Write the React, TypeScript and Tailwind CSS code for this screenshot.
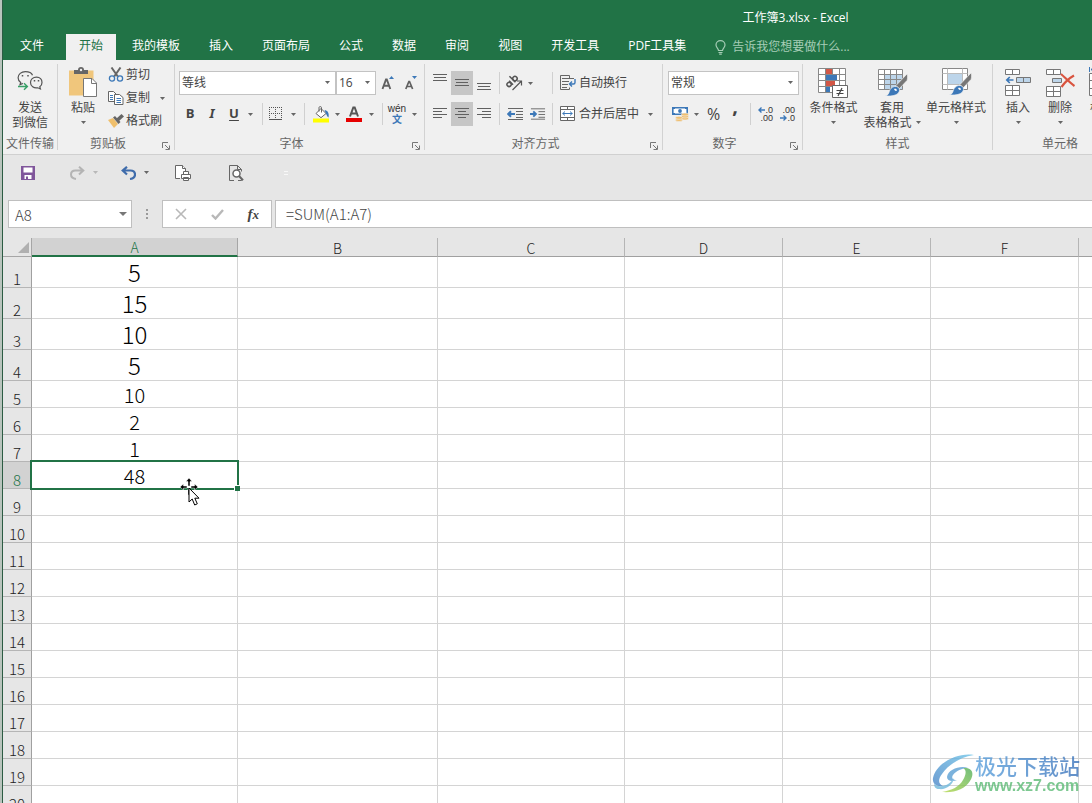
import type { ReactNode } from "react";

const sans = "font-['Open_Sans','Noto_Sans_CJK_SC',sans-serif]";

function Caret({ muted = false }: { muted?: boolean }) {
  return (
    <svg width="5" height="3" viewBox="0 0 5 3" className="shrink-0" aria-hidden="true">
      <path d="M0 0h5L2.5 3z" fill={muted ? "#b8b8b8" : "#666"} />
    </svg>
  );
}

function DropButton({ label, className = "w-4" }: { label: string; className?: string }) {
  return (
    <button aria-label={label} className={`flex h-6 shrink-0 items-center justify-center ${className}`}>
      <Caret />
    </button>
  );
}

function Divider() {
  return <div className="h-[22px] w-px shrink-0 bg-[#d0d0d0]" />;
}

function Group({ title, width, launcher = false, children }: { title: string; width: string; launcher?: boolean; children: ReactNode }) {
  return (
    <section aria-label={title} className={`flex shrink-0 flex-col ${width}`}>
      <div className="h-[75px]">{children}</div>
      <div className="flex h-[18px] items-center text-[#666]">
        <span className="flex-1 text-center whitespace-nowrap">{title}</span>
        {launcher && (
          <button aria-label={`${title}设置`} className="mx-1 mt-1 flex size-2 items-center justify-center">
            <svg width="8" height="8" viewBox="0 0 8 8" fill="none" stroke="#777">
              <path d="M.5 6V.5H6M3 3l4 4M7.5 3.5v4h-4" />
            </svg>
          </button>
        )}
      </div>
    </section>
  );
}

function Separator() {
  return <div className="my-1 w-px shrink-0 bg-[#d2d2d2]" />;
}

function BigButton({ icon, lines, width, caret = "none" }: { icon: ReactNode; lines: string[]; width: string; caret?: "none" | "below" | "inline" }) {
  return (
    <button className={`flex shrink-0 flex-col items-center pt-1.5 leading-[15px] whitespace-nowrap ${width}`}>
      <span className="mb-0.5 flex h-8 items-center justify-center">{icon}</span>
      {lines.map((line, i) => (
        <span key={line} className="flex items-center justify-center">
          {line}
          {caret === "inline" && i === lines.length - 1 && (
            <span className="ml-1">
              <Caret />
            </span>
          )}
        </span>
      ))}
      {caret === "below" && (
        <span className="flex h-[15px] items-center">
          <Caret />
        </span>
      )}
    </button>
  );
}

function IconButton({ label, active = false, width = "w-[22px]", children }: { label: string; active?: boolean; width?: string; children: ReactNode }) {
  return (
    <button aria-label={label} className={`flex h-6 shrink-0 items-center justify-center ${width} ${active ? "bg-[#c6c6c6]" : ""}`}>
      {children}
    </button>
  );
}

function Combo({ label, value, width }: { label: string; value: string; width: string }) {
  return (
    <div className={`relative shrink-0 ${width}`}>
      <select aria-label={label} defaultValue={value} className="h-6 w-full appearance-none border border-[#c3c3c3] bg-white pl-0.5 text-xs text-[#444]">
        <option>{value}</option>
      </select>
      <span className="pointer-events-none absolute top-2.5 right-1.5 flex">
        <Caret />
      </span>
    </div>
  );
}

function LinesIcon({ rows }: { rows: [number, number, number][] }) {
  return (
    <svg width="14" height="18" viewBox="0 0 14 18" stroke="#606060" aria-hidden="true">
      {rows.map(([x1, x2, y]) => (
        <path key={y} d={`M${x1} ${y}.5H${x2}`} />
      ))}
    </svg>
  );
}

function WeChatIcon() {
  return (
    <svg width="26" height="24" viewBox="0 0 26 24" fill="none" stroke="#555" strokeWidth="1.2">
      <path d="M15.500 5.200C14.700 3 11.700 1.600 8.300 1.600 4.300 1.600 1.100 4.300 1.100 7.700c0 2 1 3.600 2.600 4.700L3 14.700l2.800-1.300" />
      <path d="M13.500 12.500c0-3.100 2.500-5.400 6-5.400s5.500 2.400 5.500 5.300c0 1.800-.9 3.300-2.200 4.300l.6 2.300-2.600-1.200c-4 .8-7.300-1.700-7.300-5.300z" />
      <path d="M1 16.500h9M7 13.200l3.400 3.300L7 19.800" stroke="#37a067" strokeWidth="1.400" />
      <path d="M5.500 5v1.500M11 5v1.500M17.500 10v1.500M21.500 10v1.500" strokeWidth="1.500" />
    </svg>
  );
}

function PasteIcon() {
  return (
    <svg width="30" height="30" viewBox="0 0 30 30">
      <path d="M1 3.500h24.500V28.500H1z" fill="#f0c67c" />
      <path d="M6 3h4c0-1.800 1-3 3-3s3 1.200 3 3h4v4H6z" fill="#666" />
      <circle cx="13" cy="3" r="1.200" fill="#f0f0f0" />
      <path d="M15.500 11.500h8.500l4.500 4.500v13.500h-13z" fill="#fff" stroke="#777" />
      <path d="M23.500 11.500v5h5" fill="none" stroke="#777" />
    </svg>
  );
}

function CutIcon() {
  return (
    <svg width="16" height="15" viewBox="0 0 16 15" fill="none">
      <path d="M3.500.5l6.300 9M12.500.5l-6.300 9" stroke="#666" strokeWidth="2" />
      <circle cx="4" cy="11.500" r="2.600" stroke="#3c78b8" strokeWidth="1.300" />
      <circle cx="12" cy="11.500" r="2.600" stroke="#3c78b8" strokeWidth="1.300" />
    </svg>
  );
}

function CopyIcon() {
  return (
    <svg width="16" height="14" viewBox="0 0 16 14" fill="#fff" stroke="#666">
      <path d="M.5.5h5l3 3v7h-8z" />
      <path d="M6.500 3.500h5l3.500 3v7H6.500z" />
      <path d="M2 4.500h3M2 6.500h3M2 8.500h3M8.500 7.500h4.500M8.500 9.500h4.500M8.500 11.500h4.500" stroke="#3c78b8" />
    </svg>
  );
}

function BrushIcon() {
  return (
    <svg width="16" height="14" viewBox="0 0 16 14">
      <path d="M0 6l5-2 5 6-4 4z" fill="#efbf6c" />
      <path d="M5 3.500L7 2l5.500 6-2 2z" fill="#666" />
      <path d="M8.500 4.500L13.500 0 16 2.500l-5 4.500z" fill="#666" />
    </svg>
  );
}

function BorderIcon() {
  return (
    <svg width="14" height="14" viewBox="0 0 14 14" fill="none" stroke="#555">
      <path d="M0 .5h13M0 6.500h13M.5 0v13M6.500 0v13M12.500 0v13" strokeDasharray="1 1" />
      <path d="M0 12.500h13" />
    </svg>
  );
}

function FillIcon() {
  return (
    <svg width="17" height="17" viewBox="0 0 17 17">
      <path d="M3 7.500L8 2.500l5 5-5 4.200z" fill="#fff" stroke="#666" />
      <path d="M6 5.500V1.500c0-1.200 2.500-1.200 2.500 0v5" fill="none" stroke="#666" />
      <path d="M11.500 4c3 .3 5 3 4 7.500-1.500-.6-1.600-2.600-2.600-4z" fill="#3c78b8" />
      <path d="M0 12.500h16v4H0z" fill="#ff0" />
    </svg>
  );
}

function FontColorIcon() {
  return (
    <svg width="16" height="16" viewBox="0 0 16 16">
      <path d="M4 10.500L7.300 1.500h1.400L12 10.500M5.500 7.500h5" fill="none" stroke="#555" strokeWidth="2" />
      <path d="M0 12h16v4H0z" fill="#e60000" />
    </svg>
  );
}

function FontSizeIcon({ grow }: { grow: boolean }) {
  return (
    <svg width="14" height="16" viewBox="0 0 14 16">
      {grow ? (
        <path d="M1.500 14L5 4.500h.8L9.300 14M2.800 10.800h5.200" fill="none" stroke="#606060" strokeWidth="1.900" />
      ) : (
        <path d="M1.800 14L4.900 6.500h.6L8.600 14M3 11.500h4.600" fill="none" stroke="#606060" strokeWidth="1.700" />
      )}
      <path d={grow ? "M8 4l2.500-3L13 4z" : "M8 1h5l-2.500 3z"} fill="#3c78b8" />
    </svg>
  );
}

function OrientationIcon() {
  return (
    <svg width="18" height="18" viewBox="0 0 18 18" fill="none" stroke="#555">
      <g transform="translate(5.500 9) rotate(-45)" strokeWidth="1.500">
        <circle cx="-2" cy="0" r="2.100" />
        <path d="M.6 -2.500V3M4 -5.500V3" />
        <circle cx="6.300" cy="0" r="2.200" />
      </g>
      <path d="M7.500 16l8.500-8.500M12 7H16.500V11.500" strokeWidth="1.200" />
    </svg>
  );
}

function IndentIcon({ increase }: { increase: boolean }) {
  return (
    <svg width="17" height="14" viewBox="0 0 17 14" fill="none">
      <path d="M1 1.500h15M9 4.500h7M9 7.500h7M9 10.500h7M1 12.500h15" stroke="#666" />
      <path d={increase ? "M0 7H6M3.500 4.200L6.300 7 3.500 9.800" : "M8 7H1.500M4 4.200L1.200 7 4 9.800"} stroke="#3c78b8" strokeWidth="2" />
    </svg>
  );
}

function WrapIcon() {
  return (
    <svg width="16" height="16" viewBox="0 0 16 16" fill="none" stroke="#666">
      <path d="M.5.5h9v3M.5.5v14h9v-2M2 3.500h12M2 6.500h7M2 9.500h6M2 12.500h5" />
      <path d="M15 4v3.500c0 1-.5 1.500-1.500 1.500H10M12 6.500L9.500 9l2.500 2.500" stroke="#3c78b8" strokeWidth="1.400" />
    </svg>
  );
}

function MergeIcon() {
  return (
    <svg width="16" height="16" viewBox="0 0 16 16" fill="#fff" stroke="#666">
      <path d="M.5.500h14v14H.5zM.5 3.500h14M.5 11.500h14M7.500.500v3M7.500 11.500v3" />
      <path d="M2.500 7.500h10M5 5.500L2.800 7.500 5 9.500M10 5.500l2.200 2L10 9.500" fill="none" stroke="#3c78b8" />
    </svg>
  );
}

function CurrencyIcon() {
  return (
    <svg width="17" height="16" viewBox="0 0 17 16">
      <path d="M.8 1.800h14.400v6.400H.8z" fill="#fff" stroke="#3c78b8" strokeWidth="1.600" />
      <path d="M0 1h3v2H0zM13 1h3v2h-3zM0 7h3v2H0z" fill="#3c78b8" />
      <circle cx="8" cy="5" r="1.900" fill="#3c78b8" />
      <g fill="#f0bf70" stroke="#f0f0f0" strokeWidth=".6">
        <ellipse cx="13" cy="12.500" rx="3.500" ry="1.500" />
        <ellipse cx="13" cy="10.500" rx="3.500" ry="1.500" />
        <ellipse cx="13" cy="8.500" rx="3.500" ry="1.500" />
        <ellipse cx="7" cy="14" rx="3.500" ry="1.500" />
        <ellipse cx="7" cy="11.800" rx="3.500" ry="1.500" />
      </g>
    </svg>
  );
}

function DecimalIcon({ increase }: { increase: boolean }) {
  return (
    <span className="flex w-4 flex-col font-['Liberation_Sans',sans-serif] text-[9px] leading-[8px] text-[#333]">
      <span className="flex items-center justify-end">
        {increase && (
          <svg width="7" height="6" viewBox="0 0 7 6" fill="none" stroke="#3c78b8" strokeWidth="1.400">
            <path d="M7 3H1M3.500.5L1 3l2.500 2.500" />
          </svg>
        )}
        {increase ? ".0" : ".00"}
      </span>
      <span className="flex items-center justify-end">
        {!increase && (
          <svg width="7" height="6" viewBox="0 0 7 6" fill="none" stroke="#3c78b8" strokeWidth="1.400">
            <path d="M0 3h6M3.500.5L6 3 3.500 5.500" />
          </svg>
        )}
        {increase ? ".00" : ".0"}
      </span>
    </span>
  );
}

function PaintBrush({ x, y }: { x: number; y: number }) {
  return (
    <g transform={`translate(${x} ${y})`}>
      <path d="M22 0c.8.600.8 5 0 6.500l-8 8.500-3-3.500z" fill="#777" stroke="#f0f0f0" strokeWidth=".7" />
      <path d="M9.500 12.500c3-.5 5.300 1.300 5 4-.6 4.300-6 6-14.500 5.500 3-.6 3.500-2 4.300-4.500.7-2.700 2.600-4.500 5.200-5z" fill="#3c78b8" stroke="#f0f0f0" strokeWidth=".7" />
      <path d="M9 15c1.500-.6 2.800 0 3 1.400-.9.800-2.200.8-3-1.400z" fill="#fff" />
    </g>
  );
}

function ConditionalIcon() {
  return (
    <svg width="31" height="31" viewBox="0 0 31 31">
      <path d="M.5 1.500h27v24H.5z" fill="#fff" />
      <path d="M.5 1.500h27v24H.5zM.5 7.500h27M.5 13.500h27M.5 19.500h27M7.500 1.500v24M14.500 1.500v24M21.500 1.500v24" fill="none" stroke="#888" />
      <path d="M8 2h6v5H8zM8 14h9v5H8z" fill="#d35746" />
      <path d="M8 8h11v5H8zM8 20h4v5H8z" fill="#3c78b8" />
      <path d="M14.500 18.500h15v12h-15z" fill="#fff" stroke="#666" />
      <path d="M18.500 23.500h7M18.500 26.500h7M24 21l-4 8" stroke="#444" strokeWidth="1.200" />
    </svg>
  );
}

function TableStyleIcon() {
  return (
    <svg width="31" height="30" viewBox="0 0 31 30">
      <path d="M1.500 2.500h24v20h-24z" fill="#fff" />
      <path d="M8 8h18v15H8z" fill="#bdd5ea" />
      <path d="M1.500 2.500h24v20h-24zM1.500 7.500h24M1.500 12.500h24M1.500 17.500h24M7.500 2.500v20M13.500 2.500v20M19.500 2.500v20" fill="none" stroke="#888" />
      <PaintBrush x={8} y={7} />
    </svg>
  );
}

function CellStyleIcon() {
  return (
    <svg width="31" height="30" viewBox="0 0 31 30">
      <path d="M1.500 1.500h25v21h-25z" fill="#fff" stroke="#888" />
      <path d="M1.500 6.500h25M1.500 17.500h25M6.500 1.500v21M21.500 1.500v21" stroke="#bbb" />
      <path d="M7 7h14v10H7z" fill="#bdd5ea" />
      <PaintBrush x={8} y={6} />
    </svg>
  );
}

function InsertIcon() {
  return (
    <svg width="28" height="29" viewBox="0 0 28 29" fill="#fff" stroke="#777">
      <path d="M1.500 1.500h14v5h-14zM8.500 1.500v5M1.500 17.500h14v10h-14zM1.500 22.500h14M8.500 17.500v10" />
      <path d="M12.500 9.500h14v5h-14zM19.500 9.500v5" fill="#bdd5ea" />
      <path d="M9.500 12H3M5.800 9L2.800 12l3 3" fill="none" stroke="#3c78b8" strokeWidth="1.700" />
    </svg>
  );
}

function DeleteIcon() {
  return (
    <svg width="30" height="29" viewBox="0 0 30 29" fill="#fff" stroke="#777">
      <path d="M1.500 1.500h14v5h-14zM8.500 1.500v5M1.500 18.500h14v10h-14zM1.500 23.500h14M8.500 18.500v10" />
      <path d="M7.500 10.500h9v4h-9z" fill="#bdd5ea" />
      <path d="M16 6c4 3.500 9 9 13.500 12M29 7.500C24.500 10 20 14 16.500 19" fill="none" stroke="#d9543f" strokeWidth="2.200" />
    </svg>
  );
}

function FormatIcon() {
  return (
    <svg width="28" height="30" viewBox="0 0 28 30" fill="#fff" stroke="#777">
      <path d="M1.500 6.500h25v22h-25zM1.500 13.500h25M1.500 21.500h25M9.500 6.500v22M18.500 6.500v22" />
      <path d="M1.500 0v5M26.500 0v5M3 2.500h22M6 0L3 2.500 6 5" fill="none" stroke="#3c78b8" />
    </svg>
  );
}

function Ribbon() {
  return (
    <div className="flex h-[95px] shrink-0 overflow-hidden border-b border-[#d0d0d0] bg-[#f0f0f0]">
      <Group title="文件传输" width="w-[54px]">
        <BigButton icon={<WeChatIcon />} lines={["发送", "到微信"]} width="w-full" />
      </Group>
      <Separator />
      <Group title="剪贴板" width="w-[116px]" launcher>
        <div className="flex">
          <BigButton icon={<PasteIcon />} lines={["粘贴"]} width="w-[50px]" caret="below" />
          <div className="flex flex-1 flex-col pt-[3px]">
            <button className="flex h-[23px] items-center gap-0.5">
              <CutIcon />
              剪切
            </button>
            <div className="flex items-center">
              <button className="flex h-[23px] items-center gap-0.5">
                <CopyIcon />
                复制
              </button>
              <DropButton label="复制选项" className="w-6" />
            </div>
            <button className="flex h-[22px] items-center gap-0.5">
              <BrushIcon />
              格式刷
            </button>
          </div>
        </div>
      </Group>
      <Separator />
      <Group title="字体" width="w-[249px]" launcher>
        <div className="flex flex-col gap-[7px] pt-[11px] pl-1">
          <div className="flex items-center">
            <Combo label="字体" value="等线" width="w-[157px]" />
            <Combo label="字号" value="16" width="w-10" />
            <IconButton label="增大字号" width="w-6">
              <FontSizeIcon grow />
            </IconButton>
            <IconButton label="减小字号">
              <FontSizeIcon grow={false} />
            </IconButton>
          </div>
          <div className="flex items-center">
            <button aria-label="加粗" className="h-6 w-[22px] text-[13px] font-bold">B</button>
            <button aria-label="倾斜" className="h-6 w-[22px] font-['Noto_Sans',sans-serif] text-[13px] font-bold italic">I</button>
            <button aria-label="下划线" className="h-6 w-[22px] text-[13px] font-bold underline underline-offset-2">U</button>
            <DropButton label="下划线选项" className="w-[11px]" />
            <div className="w-1.5" />
            <Divider />
            <IconButton label="边框" width="w-[26px]">
              <BorderIcon />
            </IconButton>
            <DropButton label="边框选项" className="w-2" />
            <div className="w-[7px]" />
            <Divider />
            <IconButton label="填充颜色" width="w-7 pl-1">
              <FillIcon />
            </IconButton>
            <DropButton label="填充颜色选项" className="w-2" />
            <IconButton label="字体颜色" width="w-[26px]">
              <FontColorIcon />
            </IconButton>
            <DropButton label="字体颜色选项" className="w-2" />
            <div className="w-[7px]" />
            <Divider />
            <button aria-label="拼音" className="flex h-6 w-7 flex-col items-center justify-center font-['Liberation_Sans','Noto_Sans_CJK_SC',sans-serif] text-[10px] leading-[11px] text-[#333]">
              <span>wén</span>
              <span className="font-bold text-[#3c78b8]">文</span>
            </button>
            <DropButton label="拼音选项" className="w-1.5" />
          </div>
        </div>
      </Group>
      <Separator />
      <Group title="对齐方式" width="w-[237px]" launcher>
        <div className="flex flex-col gap-[7px] pt-[11px] pl-1">
          <div className="flex items-center">
            <IconButton label="顶端对齐">
              <LinesIcon rows={[[0, 14, 0], [1, 13, 3], [0, 14, 6]]} />
            </IconButton>
            <IconButton label="垂直居中" active>
              <LinesIcon rows={[[0, 14, 5], [1, 13, 8], [0, 14, 11]]} />
            </IconButton>
            <IconButton label="底端对齐">
              <LinesIcon rows={[[0, 14, 9], [1, 13, 12], [0, 14, 15]]} />
            </IconButton>
            <div className="w-1" />
            <Divider />
            <IconButton label="方向" width="w-7">
              <OrientationIcon />
            </IconButton>
            <DropButton label="方向选项" className="w-1" />
            <div className="w-5" />
            <Divider />
            <button className="ml-[7px] flex h-6 shrink-0 items-center gap-[3px] whitespace-nowrap">
              <WrapIcon />
              自动换行
            </button>
          </div>
          <div className="flex items-center">
            <IconButton label="左对齐">
              <LinesIcon rows={[[0, 14, 3], [0, 9, 6], [0, 14, 9], [0, 9, 12]]} />
            </IconButton>
            <IconButton label="居中" active>
              <LinesIcon rows={[[0, 14, 3], [3, 11, 6], [0, 14, 9], [3, 11, 12]]} />
            </IconButton>
            <IconButton label="右对齐">
              <LinesIcon rows={[[0, 14, 3], [5, 14, 6], [0, 14, 9], [5, 14, 12]]} />
            </IconButton>
            <div className="w-1" />
            <Divider />
            <IconButton label="减少缩进量" width="w-[30px]">
              <IndentIcon increase={false} />
            </IconButton>
            <IconButton label="增加缩进量" width="w-4">
              <IndentIcon increase />
            </IconButton>
            <div className="w-1.5" />
            <Divider />
            <button className="ml-[7px] flex h-6 shrink-0 items-center gap-[3px] whitespace-nowrap">
              <MergeIcon />
              合并后居中
            </button>
            <DropButton label="合并选项" className="w-[22px]" />
          </div>
        </div>
      </Group>
      <Separator />
      <Group title="数字" width="w-[139px]" launcher>
        <div className="flex flex-col gap-[7px] pt-[11px] pl-[5px]">
          <Combo label="数字格式" value="常规" width="w-[131px]" />
          <div className="flex items-center">
            <IconButton label="会计数字格式" width="w-6">
              <CurrencyIcon />
            </IconButton>
            <DropButton label="会计格式选项" className="w-2" />
            <button aria-label="百分比" className="h-6 w-[27px] text-base">%</button>
            <button aria-label="千位分隔" className="flex h-6 w-4 items-center justify-center pb-4 text-xl leading-none font-bold">,</button>
            <div className="w-[7px]" />
            <Divider />
            <IconButton label="增加小数位" width="w-7">
              <DecimalIcon increase />
            </IconButton>
            <IconButton label="减少小数位" width="w-4">
              <DecimalIcon increase={false} />
            </IconButton>
          </div>
        </div>
      </Group>
      <Separator />
      <Group title="样式" width="w-[189px]">
        <div className="flex">
          <BigButton icon={<ConditionalIcon />} lines={["条件格式"]} width="w-[61px]" caret="below" />
          <BigButton icon={<TableStyleIcon />} lines={["套用", "表格格式"]} width="w-14" caret="inline" />
          <BigButton icon={<CellStyleIcon />} lines={["单元格样式"]} width="w-[72px]" caret="below" />
        </div>
      </Group>
      <Separator />
      <Group title="单元格" width="w-[134px]">
        <div className="flex pl-1">
          <BigButton icon={<InsertIcon />} lines={["插入"]} width="w-[42px]" caret="below" />
          <BigButton icon={<DeleteIcon />} lines={["删除"]} width="w-[42px]" caret="below" />
          <BigButton icon={<FormatIcon />} lines={["格式"]} width="w-[42px]" caret="below" />
        </div>
      </Group>
    </div>
  );
}

const tabs = ["开始", "我的模板", "插入", "页面布局", "公式", "数据", "审阅", "视图", "开发工具", "PDF工具集"];

function TitleBar() {
  return (
    <header className="flex h-[60px] shrink-0 flex-col bg-[#217346] text-xs text-white">
      <div className="flex h-9 items-center justify-center pl-[496px] whitespace-nowrap">工作簿3.xlsx - Excel</div>
      <nav className="-mt-0.5 flex h-[26px] pl-1 whitespace-nowrap">
        <button className="mr-[9px] px-[13px] pb-0.5">文件</button>
        <div className="flex gap-[3px]">
          {tabs.map((tab, i) => (
            <button key={tab} className={`px-[13px] pb-0.5 ${i === 0 ? "bg-[#f0f0f0] text-[#217346]" : ""}`}>
              {tab}
            </button>
          ))}
        </div>
        <button className="ml-4 flex items-center gap-1.5 text-[#a6cdb6]">
          <svg width="11" height="15" viewBox="0 0 11 15" fill="none" stroke="#a6cdb6" strokeWidth="1.200">
            <path d="M3.500 10.500C3.500 8.500 1 7.500 1 5a4.500 4.300 0 0 1 9 0c0 2.500-2.500 3.500-2.500 5.500zM3.500 12.500h4M4.200 14.200h2.600" />
          </svg>
          告诉我您想要做什么...
        </button>
      </nav>
    </header>
  );
}

function QuickAccess() {
  return (
    <div className="flex h-[35px] shrink-0 items-center pl-[18px]">
      <button aria-label="保存" className="mr-[35px]">
        <svg width="14" height="14" viewBox="0 0 14 14">
          <path d="M0 0h14v14H0z" fill="#80569b" />
          <path d="M2.500 1.500h9v5h-9zM3.500 9h7v4h-7z" fill="#fff" />
          <path d="M5 10.500h2V13H5z" fill="#80569b" />
        </svg>
      </button>
      <button aria-label="恢复" className="mr-2">
        <svg width="15" height="14" viewBox="0 0 15 14" fill="none" stroke="#b4b4b4" strokeWidth="2">
          <path d="M6 13C2.500 12.500 1 10.500 1 8.500 1 6 3 4.500 5.500 4.500H13M9 .8l4.300 3.700L9 8.500" />
        </svg>
      </button>
      <Caret muted />
      <button aria-label="撤消" className="mr-2 ml-[23px]">
        <svg width="15" height="14" viewBox="0 0 15 14" fill="none" stroke="#3f6cab" strokeWidth="2.200">
          <path d="M9 13c3.500-.5 5-2.500 5-4.500 0-2.500-2-4-4.500-4H2M6 .8L1.700 4.500 6 8.500" />
        </svg>
      </button>
      <Caret />
      <button aria-label="快速打印" className="ml-[26px]">
        <svg width="17" height="16" viewBox="0 0 17 16" fill="#fff" stroke="#666">
          <path d="M5 13.500H.5V.5h7l3 3V6" />
          <path d="M7.500.5v3h3M6.500 9.500h9v4h-9zM8.500 6.500h5v3h-5zM8.500 12.500h5v3h-5z" />
        </svg>
      </button>
      <button aria-label="打印预览" className="ml-[37px]">
        <svg width="15" height="16" viewBox="0 0 15 16" fill="none" stroke="#666">
          <path d="M5 15.500H.5V.5h8l4 4v2M8.500.5v4h4M12.500 13v2.500H9" />
          <circle cx="7.500" cy="8.500" r="3.500" strokeWidth="1.500" fill="#fff" />
          <path d="M10 11l4 4.200" strokeWidth="2" />
        </svg>
      </button>
      <button aria-label="自定义快速访问工具栏" className="ml-10 h-1 w-1 border-y border-[#f8f8f8]" />
    </div>
  );
}

function FormulaBar() {
  return (
    <div className="mt-2.5 mb-2.5 flex h-7 shrink-0 items-stretch pl-[5px] text-[15px] text-[#444]">
      <div className="flex w-[124px] shrink-0 items-center border border-[#bfbfbf] bg-white pr-1">
        <input aria-label="名称框" defaultValue="A8" className="h-full w-0 flex-1 bg-transparent pl-1.5 font-['Noto_Sans_CJK_SC',sans-serif] font-light" />
        <button aria-label="名称列表">
          <svg width="8" height="4" viewBox="0 0 8 4">
            <path d="M0 0h8L4 4z" fill="#777" />
          </svg>
        </button>
      </div>
      <svg width="30" height="28" viewBox="0 0 30 28" fill="#9a9a9a" className="shrink-0" aria-hidden="true">
        <path d="M14 9h2v2h-2zM14 13h2v2h-2zM14 17h2v2h-2z" />
      </svg>
      <div className="flex w-[110px] shrink-0 items-center justify-around border border-[#bfbfbf] bg-white">
        <button aria-label="取消">
          <svg width="12" height="12" viewBox="0 0 12 12" stroke="#b8b8b8" strokeWidth="1.600">
            <path d="M1 1l10 10M11 1L1 11" />
          </svg>
        </button>
        <button aria-label="输入">
          <svg width="13" height="11" viewBox="0 0 13 11" fill="none" stroke="#b8b8b8" strokeWidth="2.400">
            <path d="M1 6l3.500 3.500L12 1" />
          </svg>
        </button>
        <button aria-label="插入函数" className="font-['Liberation_Serif',serif] text-[15px] leading-4 font-bold italic">
          f<span className="text-[13px]">x</span>
        </button>
      </div>
      <input
        aria-label="编辑栏"
        defaultValue="=SUM(A1:A7)"
        className="ml-[3px] min-w-0 flex-1 border border-r-0 border-[#bfbfbf] bg-white pl-2.5 font-['Noto_Sans_CJK_SC',sans-serif] font-light"
      />
    </div>
  );
}

const values = ["5", "15", "10", "5", "10", "2", "1", "48"];
const columns = [
  { name: "A", width: "w-[206px]" },
  { name: "B", width: "w-[200px]" },
  { name: "C", width: "w-[187px]" },
  { name: "D", width: "w-[158px]" },
  { name: "E", width: "w-[148px]" },
  { name: "F", width: "w-[148px]" },
  { name: "", width: "" },
];

function MoveCursor() {
  return (
    <svg width="20" height="28" viewBox="0 0 20 28" className="absolute top-4 left-[148px] z-20" aria-hidden="true">
      <path d="M9 0l3 3.500h-2V8H8V3.500H6zM0 9l3.500-3v2H7v2H3.500v2zM18 9l-3.500-3v2H11v2h3.500v2zM8 11h2v6H8z" fill="#000" stroke="#fff" strokeWidth=".5" />
      <path d="M9 10v14l3.200-3 2.500 6 2.600-1.200-2.500-5.600H19z" fill="#fff" stroke="#000" />
    </svg>
  );
}

function Sheet() {
  return (
    <div className="min-h-0 flex-1 overflow-hidden bg-white font-['Noto_Sans_CJK_SC',sans-serif] font-light">
      <table className="w-full table-fixed border-separate border-spacing-0">
        <colgroup>
          <col className="w-[29px]" />
          {columns.map((c) => (
            <col key={c.name} className={c.width} />
          ))}
        </colgroup>
        <thead>
          <tr className="h-[19px] bg-[#e6e6e6] text-sm leading-4 text-[#222]">
            <th className="border-r border-b border-[#a6a6a6] p-0">
              <svg width="11" height="11" viewBox="0 0 11 11" className="mr-0.5 ml-auto">
                <path d="M11 0v11H0z" fill="#b0b0b0" />
              </svg>
            </th>
            {columns.map((c) => (
              <th
                key={c.name}
                scope="col"
                className={`p-0 pt-px align-middle font-light ${c.name === "" ? "" : "border-r"} ${
                  c.name === "A" ? "border-b-2 border-r-[#a6a6a6] border-b-[#217346] bg-[#d2d2d2] text-[#217346]" : "border-b border-r-[#b5b5b5] border-b-[#a0a0a0]"
                }`}
              >
                {c.name}
              </th>
            ))}
          </tr>
        </thead>
        <tbody>
          {Array.from({ length: 20 }, (_, r) => (
            <tr key={r} className={r < 4 ? "h-[31px]" : "h-[27px]"}>
              <th
                scope="row"
                className={`border-r border-b border-r-[#a0a0a0] border-b-[#b5b5b5] p-0 text-center align-bottom text-[15px] leading-4 font-light ${
                  r === 7 ? "bg-[#d2d2d2] text-[#217346]" : "bg-[#e6e6e6] text-[#222]"
                }`}
              >
                {r + 1}
              </th>
              {columns.map((c, i) => (
                <td
                  key={c.name}
                  className={`relative border-b border-[#d4d4d4] p-0 text-center leading-[22px] text-black ${c.name === "" ? "" : "border-r"} ${r < 4 ? "text-2xl" : "pt-0.5 text-xl"}`}
                >
                  {i === 0 ? values[r] : ""}
                  {i === 0 && r === 7 && (
                    <>
                      <div className="pointer-events-none absolute -top-0.5 -right-0.5 -bottom-0.5 -left-0.5 z-10 border-2 border-[#217346]">
                        <div className="absolute -right-[3px] -bottom-[3px] size-[6px] border-t border-l border-white bg-[#217346]" />
                      </div>
                      <MoveCursor />
                    </>
                  )}
                </td>
              ))}
            </tr>
          ))}
        </tbody>
      </table>
    </div>
  );
}

function Watermark() {
  return (
    <div className="pointer-events-none absolute right-3 bottom-2 z-30 flex items-center opacity-80">
      <svg width="44" height="42" viewBox="0 0 44 42">
        <defs>
          <linearGradient id="swirl-blue" x1="0" y1="1" x2="1" y2="0">
            <stop offset="0" stopColor="#4a86c8" />
            <stop offset="1" stopColor="#6fc4e8" />
          </linearGradient>
          <linearGradient id="swirl-green" x1="0" y1="1" x2="1" y2="0">
            <stop offset="0" stopColor="#b5d84a" />
            <stop offset="1" stopColor="#4fae5c" />
          </linearGradient>
        </defs>
        <path d="M43 2C27-1 5 10 2 25c-1 6 4 9 10 8-5-2-5-7-1-12C17 12 29 4 43 2z" fill="url(#swirl-blue)" />
        <path d="M37 15c-7-3-20 1-21 9 0 4 5 5 10 3-4 0-6-2-4-5 3-4 9-7 15-7z" fill="#5b9fd4" />
        <path d="M3 31c6 5 16 1 20-6-1 7-8 12-15 11-3 0-5-2-5-5z" fill="#70b8dc" />
        <path d="M32 15c11-1 11 7 7 13-5 8-15 12-28 11 10-2 17-5 21-12 3-5 4-10 0-12z" fill="url(#swirl-green)" />
      </svg>
      <div className="flex flex-col">
        <span className="bg-linear-to-r from-[#5aa0dc] to-[#3c74bb] bg-clip-text font-['Noto_Sans_CJK_SC',sans-serif] text-[21px] leading-6 font-medium text-transparent">极光下载站</span>
        <span className="font-['Liberation_Sans',sans-serif] text-base leading-[18px] font-bold text-[#5dbb76]">www.xz7.com</span>
      </div>
    </div>
  );
}

export default function App() {
  return (
    <div className={`relative flex h-screen overflow-hidden text-xs text-[#444] ${sans}`}>
      <div className="w-[3px] shrink-0 border-r border-[#2c5c43] bg-[#b9c4bd]" />
      <main className="flex min-w-0 flex-1 flex-col bg-[#e6e6e6]">
        <TitleBar />
        <Ribbon />
        <QuickAccess />
        <FormulaBar />
        <Sheet />
      </main>
      <Watermark />
    </div>
  );
}
